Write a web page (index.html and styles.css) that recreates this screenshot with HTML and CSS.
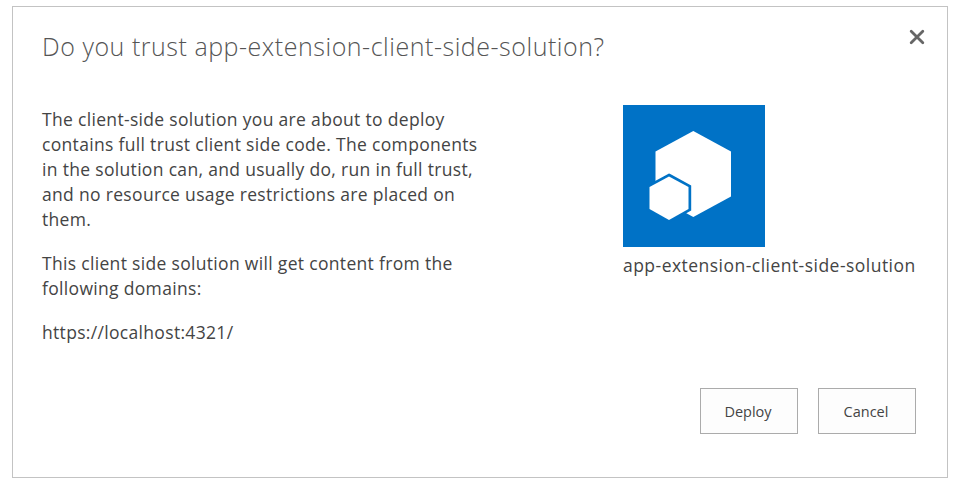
FILE: index.html
```html
<!DOCTYPE html>
<html lang="en">
<head>
  <meta charset="UTF-8">
  <meta name="viewport" content="width=device-width, initial-scale=1.0">
  <title>Do you trust app-extension-client-side-solution?</title>
  <link rel="stylesheet" href="styles.css">
</head>
<body>
  <div class="dialog">
    <div class="dialog-header">
      <h1>Do you trust app-extension-client-side-solution?</h1>
      <button class="close-button" aria-label="Close">
        <svg width="16" height="16" viewBox="0 0 16 16">
          <path d="M2.2 2.2L13.8 13.8M13.8 2.2L2.2 13.8"/>
        </svg>
      </button>
    </div>

    <div class="dialog-content">
      <div class="message">
        <p>The client-side solution you are about to deploy contains full trust client side code. The components in the solution can, and usually do, run in full trust, and no resource usage restrictions are placed on them.</p>
        <p>This client side solution will get content from the following domains:</p>
        <p>https://localhost:4321/</p>
      </div>

      <div class="app">
        <svg class="app-icon" width="142" height="142" viewBox="0 0 142 142">
          <rect width="142" height="142" fill="#0072c6"/>
          <polygon fill="#fff" points="70.3,26 108,46.5 108,91.5 70.3,112 32.5,91.5 32.5,46.5"/>
          <polygon class="small-hexagon" points="46,71.5 65.5,82 65.5,104 46,115 26.5,104 26.5,82"/>
        </svg>
        <div class="app-name">app-extension-client-side-solution</div>
      </div>
    </div>

    <div class="dialog-buttons">
      <button>Deploy</button>
      <button>Cancel</button>
    </div>
  </div>
</body>
</html>
```

FILE: styles.css
```css
* {
  box-sizing: border-box;
}

body {
  margin: 0;
  padding: 6px 8px 3px 12px;
  background: #fff;
  font-family: "Segoe UI", "Open Sans", "Noto Sans", sans-serif;
  color: #444;
}

.dialog {
  display: flex;
  flex-direction: column;
  height: 472px;
  padding: 0 31px 0 29px;
  border: 1px solid #c3c3c3;
}

.dialog-header {
  display: flex;
  justify-content: space-between;
  height: 98px;
}

h1 {
  margin: 21px 0 0;
  font-size: 25px;
  font-weight: 300;
  line-height: 36px;
  letter-spacing: 0.53px;
  white-space: nowrap;
  color: #555;
}

.close-button {
  width: 16px;
  height: 16px;
  margin: 22px -9px 0 0;
  padding: 0;
  border: none;
  background: none;
}

.close-button svg {
  display: block;
  fill: none;
  stroke: #666;
  stroke-width: 2.8;
  stroke-linecap: round;
}

.dialog-content {
  display: flex;
  justify-content: space-between;
  height: 283px;
}

.message {
  width: 440px;
  font-size: 17.5px;
  line-height: 25px;
  letter-spacing: 0.32px;
}

.message p {
  margin: 2px 0 19px;
}

.app {
  width: 293px;
}

.app-icon {
  display: block;
}

.small-hexagon {
  fill: #fff;
  stroke: #0072c6;
  stroke-width: 5.4;
  paint-order: stroke;
}

.app-name {
  margin-top: 6px;
  font-size: 17.5px;
  line-height: 25px;
  letter-spacing: 0.47px;
  white-space: nowrap;
}

.dialog-buttons {
  display: flex;
  justify-content: flex-end;
  gap: 20px;
}

.dialog-buttons button {
  width: 98px;
  height: 46px;
  padding: 0 2px 0 0;
  border: 1px solid #ababab;
  background: #fdfdfd;
  font-family: inherit;
  font-size: 14.5px;
  color: #444;
}
```
